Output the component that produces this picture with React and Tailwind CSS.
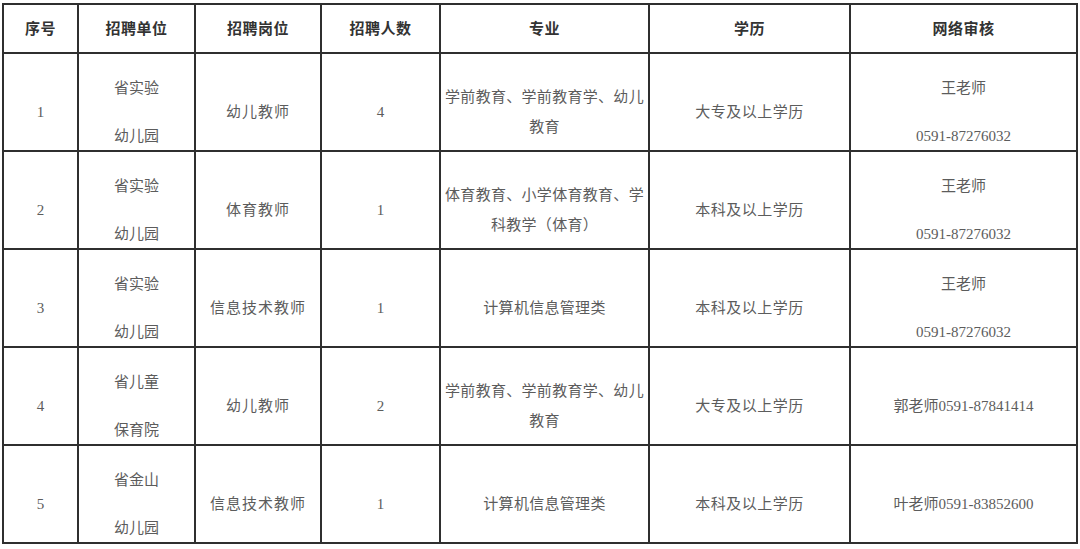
import React from "react";

const FONT = { fontFamily: '"Liberation Serif", "Noto Sans CJK SC", serif' };

const HEADERS = ["序号", "招聘单位", "招聘岗位", "招聘人数", "专业", "学历", "网络审核"];

const ROWS = [
  {
    no: "1",
    unit: ["省实验", "幼儿园"],
    post: "幼儿教师",
    count: "4",
    major: ["学前教育、学前教育学、幼儿", "教育"],
    edu: "大专及以上学历",
    contact: ["王老师", "0591-87276032"],
  },
  {
    no: "2",
    unit: ["省实验", "幼儿园"],
    post: "体育教师",
    count: "1",
    major: ["体育教育、小学体育教育、学", "科教学（体育）"],
    edu: "本科及以上学历",
    contact: ["王老师", "0591-87276032"],
  },
  {
    no: "3",
    unit: ["省实验", "幼儿园"],
    post: "信息技术教师",
    count: "1",
    major: ["计算机信息管理类"],
    edu: "本科及以上学历",
    contact: ["王老师", "0591-87276032"],
  },
  {
    no: "4",
    unit: ["省儿童", "保育院"],
    post: "幼儿教师",
    count: "2",
    major: ["学前教育、学前教育学、幼儿", "教育"],
    edu: "大专及以上学历",
    contact: ["郭老师0591-87841414"],
  },
  {
    no: "5",
    unit: ["省金山", "幼儿园"],
    post: "信息技术教师",
    count: "1",
    major: ["计算机信息管理类"],
    edu: "本科及以上学历",
    contact: ["叶老师0591-83852600"],
  },
];

const cell = "border-r-2 border-b-2 border-[#2f2f2f] flex flex-col items-center justify-center text-center";

function Paras({ items }) {
  // two separate paragraphs, spaced wide like the source document
  return (
    <div className="flex flex-col items-center gap-[24px]">
      {items.map((t) => (
        <div key={t} className="leading-[24px]">{t}</div>
      ))}
    </div>
  );
}

function Lines({ items }) {
  return (
    <div className="flex flex-col items-center">
      {items.map((t) => (
        <div key={t} className="leading-[30px]">{t}</div>
      ))}
    </div>
  );
}

export default function App() {
  return (
    <div className="w-[1080px] h-[549px] bg-white pl-[2px] pt-[3px]" style={FONT}>
      <div className="grid grid-cols-[75px_117px_126px_119px_209px_201px_227px] grid-rows-[49px_98px_98px_98px_98px_98px] border-l-2 border-t-2 border-[#2f2f2f] w-max">
        {HEADERS.map((h) => (
          <div key={h} className={`${cell} pt-[2px] text-[15px] font-bold text-[#333333] tracking-[0.5px]`}>
            {h}
          </div>
        ))}
        {ROWS.map((r) => (
          <React.Fragment key={r.no}>
            <div className={`${cell} pt-5 text-[15px] text-[#5c5c5c]`}>{r.no}</div>
            <div className={`${cell} pt-5 text-[15px] text-[#5c5c5c]`}>
              <Paras items={r.unit} />
            </div>
            <div className={`${cell} pt-5 text-[15px] text-[#5c5c5c] tracking-[1px]`}>{r.post}</div>
            <div className={`${cell} pt-5 text-[15px] text-[#5c5c5c]`}>{r.count}</div>
            <div className={`${cell} pt-5 text-[15px] text-[#5c5c5c] tracking-[0.3px]`}>
              <Lines items={r.major} />
            </div>
            <div className={`${cell} pt-5 text-[15px] text-[#5c5c5c] tracking-[0.5px]`}>{r.edu}</div>
            <div className={`${cell} pt-5 text-[15px] text-[#5c5c5c]`}>
              {r.contact.length > 1 ? <Paras items={r.contact} /> : r.contact[0]}
            </div>
          </React.Fragment>
        ))}
      </div>
    </div>
  );
}
